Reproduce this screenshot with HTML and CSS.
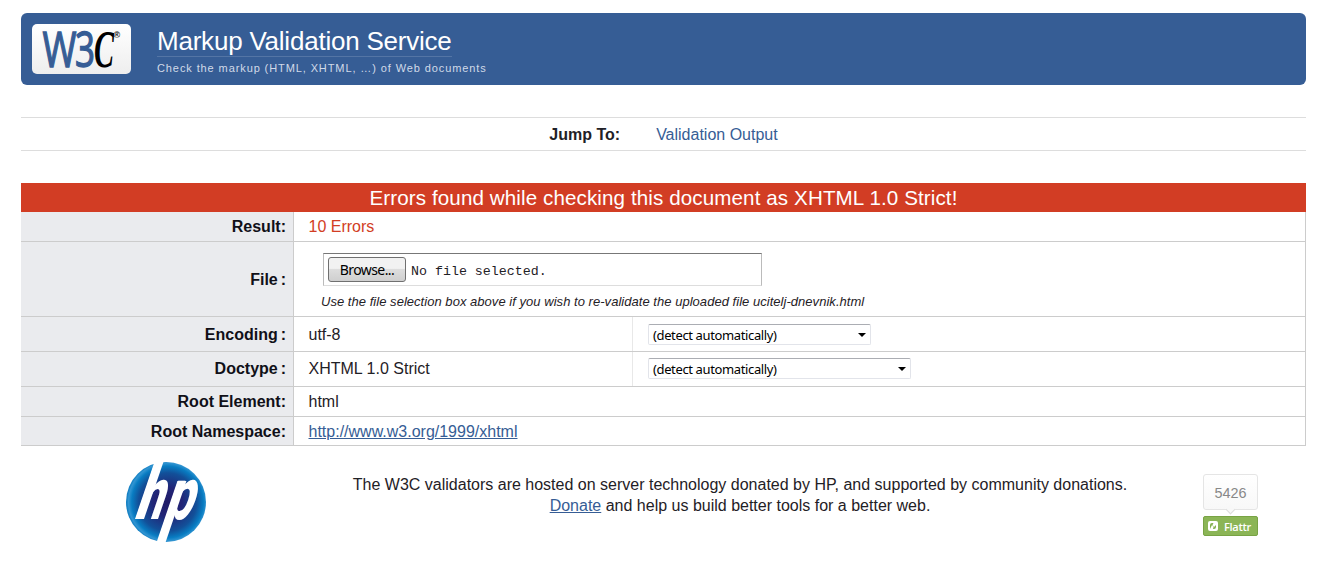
FILE: index.html
```html
<!DOCTYPE html>
<html lang="en">
<head>
<meta charset="utf-8">
<title>Markup Validation Service</title>
<link rel="stylesheet" href="styles.css">
</head>
<body>
<header class="banner">
  <div class="logo">
    <svg width="99" height="50" viewBox="0 0 99 50" aria-label="W3C">
      <text class="logo-w" x="10.500" y="43" textLength="34" lengthAdjust="spacingAndGlyphs">W</text>
      <text class="logo-w" x="43" y="43" textLength="20" lengthAdjust="spacingAndGlyphs">3</text>
      <text class="logo-c" x="62" y="43" textLength="20" lengthAdjust="spacingAndGlyphs">C</text>
      <text class="logo-r" x="81.500" y="14">®</text>
    </svg>
  </div>
  <div class="titles">
    <h1><span>Markup Validation Service</span></h1>
    <p>Check the markup (HTML, XHTML, …) of Web documents</p>
  </div>
</header>
<nav class="jump"><strong>Jump To:</strong><a href="#out">Validation Output</a></nav>
<main>
  <h2 class="invalid">Errors found while checking this document as XHTML 1.0 Strict!</h2>
  <div class="results">
    <div class="row r30"><div class="label">Result:</div><div class="value error">10 Errors</div></div>
    <div class="row file"><div class="label low spaced">File :</div>
      <div class="value upload">
        <div class="filebox"><button>Browse...</button><span>No file selected.</span></div>
        <p class="hint">Use the file selection box above if you wish to re-validate the uploaded file ucitelj-dnevnik.html</p>
      </div>
    </div>
    <div class="row r35"><div class="label low spaced">Encoding :</div><div class="value half low">utf-8</div><div class="option"><div class="select">(detect automatically)<i></i></div></div></div>
    <div class="row r35 doctype"><div class="label spaced">Doctype :</div><div class="value half">XHTML 1.0 Strict</div><div class="option"><div class="select wide">(detect automatically)<i></i></div></div></div>
    <div class="row r30"><div class="label">Root Element:</div><div class="value">html</div></div>
    <div class="row r29"><div class="label low">Root Namespace:</div><div class="value low"><a class="link" href="#ns">http://www.w3.org/1999/xhtml</a></div></div>
  </div>
</main>
<footer>
  <svg class="hp" width="80" height="80" viewBox="0 0 80 80" aria-label="hp">
    <defs>
      <radialGradient id="orb" cx=".52" cy=".5" r=".52">
        <stop offset="0" stop-color="#211c68"/><stop offset=".35" stop-color="#222577"/>
        <stop offset=".7" stop-color="#125099"/><stop offset=".86" stop-color="#087cc2"/>
        <stop offset=".94" stop-color="#3295d2"/><stop offset="1" stop-color="#0878be"/>
      </radialGradient>
      <clipPath id="disc"><circle cx="40" cy="40" r="41"/></clipPath>
    </defs>
    <circle cx="40" cy="40" r="40" fill="url(#orb)"/>
    <g clip-path="url(#disc)"><g transform="translate(0 57) skewX(-18.800)">
      <rect x="9" y="-60" width="9" height="60" fill="#fff"/>
      <rect x="38.500" y="-38" width="9" height="64" fill="#fff"/>
      <text class="hp-text" transform="scale(.58 1)" x="10.500 61.500" y="-.5">hp</text>
    </g></g>
  </svg>
  <p class="support">The W3C validators are hosted on server technology donated by HP, and supported by community donations.<br><a class="link" href="#donate">Donate</a> and help us build better tools for a better web.</p>
  <div class="flattr">
    <div class="count">5426</div>
    <div class="badge"><svg width="10" height="10" viewBox="0 0 10 10"><rect width="10" height="10" rx="2" fill="#fff"/><path d="M2 8V4Q2 2 4 2L5.500 2 4.500 4 6 6 8 4V6Q8 8 6 8L5 8 5.500 6 4 4Z" fill="#84b050"/></svg><span>Flattr</span></div>
  </div>
</footer>
</body>
</html>
```
FILE: styles.css
```css
* { box-sizing: border-box; }
body { margin: 0; padding: 13px 22px 0 21px; background: #fff; color: #1f2126; font: 16px/20px "Liberation Sans", Arial, sans-serif; }
h1, h2, p { margin: 0; font-weight: normal; }
.banner { display: flex; height: 72px; padding: 11px; background: #365d95; border-radius: 6px; }
.logo { width: 99px; height: 50px; border-radius: 5px; background: linear-gradient(#fff, #eee); }
.logo svg { display: block; }
.logo-w { font: 50px "Open Sans", sans-serif; fill: #365d95; stroke: #365d95; stroke-width: 1.4px; }
.logo-c { font: italic bold 52px "Liberation Serif", serif; fill: #000; }
.logo-r { font: bold 9px "Liberation Sans", sans-serif; fill: #111; }
.titles { padding-left: 26px; color: #fff; }
.titles h1 { height: 33px; font-size: 26px; line-height: 35px; letter-spacing: -.22px; }
.titles h1 span { display: block; width: 295px; height: 33px; border-bottom: 1px solid #5475a5; white-space: nowrap; }
.titles p { font-size: 11px; line-height: 22px; letter-spacing: .9px; color: #d1dae8; }
.jump { display: flex; justify-content: center; gap: 36px; height: 34px; margin-top: 32px; border: solid #ddd; border-width: 1px 0; line-height: 34px; }
.jump a { color: #365d95; text-decoration: none; }
main { margin-top: 32px; }
.invalid { height: 29px; background: #d23d24; color: #fff; font-size: 20.6px; line-height: 29px; letter-spacing: .1px; text-align: center; }
.results { border-right: 1px solid #ccc; }
.row { display: flex; border-bottom: 1px solid #ccc; }
.r30 { height: 30px; }
.r29 { height: 29px; }
.r35 { height: 35px; }
.file { height: 75px; }
.label { display: flex; align-items: center; justify-content: flex-end; width: 273px; padding-right: 7px; background: #eaebee; border-right: 1px solid #ccc; color: #101018; font-weight: bold; }
.spaced { word-spacing: -1.5px; }
.value { display: flex; align-items: center; padding-left: 14.5px; }
.low { padding-top: 2px; }
.half { width: 339px; border-right: 1px solid #e8e8e8; }
.error { color: #d23d24; }
.link { color: #365d95; }
.upload { display: block; padding-top: 11px; padding-left: 14px; }
.filebox { display: flex; align-items: center; width: 439px; height: 33px; margin-left: 15px; padding: 0 4px; border: 1px solid #bbb; border-top: 1px solid #777; border-bottom-color: #ddd; font: 13.3px "Liberation Mono", monospace; }
.filebox span { padding-top: 4px; }
.filebox button { width: 78px; height: 25px; padding: 0; margin-right: 5px; border: 1px solid #707070; border-radius: 3px; background: linear-gradient(#f2f2f2 0 45%, #ddd 50%, #cfcfcf); font: 14px "Noto Sans", sans-serif; letter-spacing: -.6px; }
.hint { margin-left: 13px; font-size: 13px; line-height: 31px; font-style: italic; letter-spacing: .035px; }
.option { padding: 7px 0 0 15px; }
.doctype .option { padding-top: 6px; }
.select { display: flex; align-items: center; justify-content: space-between; width: 223px; height: 21px; padding: 0 4px; border: 1px solid #e2e4ea; border-top-color: #abadb3; border-radius: 2px; color: #000; font: 13px "Noto Sans", sans-serif; letter-spacing: -.37px; }
.wide { width: 263px; }
.select i { border: solid transparent; border-width: 4px 4px 0; border-top-color: #000; }
footer { display: flex; padding: 16px 0 0 105px; }
.hp { flex: none; }
.hp-text { font: bold 70px "DejaVu Sans", sans-serif; fill: #fff; }
.support { width: 828px; margin-left: 120px; padding-top: 12px; line-height: 21px; text-align: center; }
.flattr { width: 55px; margin-left: 49px; padding-top: 12px; }
.count { position: relative; height: 36px; border: 1px solid #e5e5e5; border-radius: 3px; background: linear-gradient(#fff, #f8f8f8); color: #888; font-size: 14.4px; line-height: 37px; text-align: center; }
.count::after { content: ""; position: absolute; left: 23px; bottom: -4px; width: 6px; height: 6px; border: solid #ddd; border-width: 0 1px 1px 0; background: #f8f8f8; transform: rotate(45deg); }
.badge { display: flex; align-items: center; height: 20px; margin-top: 6px; padding: 0 4px; gap: 6px; border: 1px solid #78a344; border-radius: 2px; background: #8bb556; color: #fff; font: 600 11px "Open Sans", sans-serif; letter-spacing: -.3px; }
.badge svg { flex: none; }
```
